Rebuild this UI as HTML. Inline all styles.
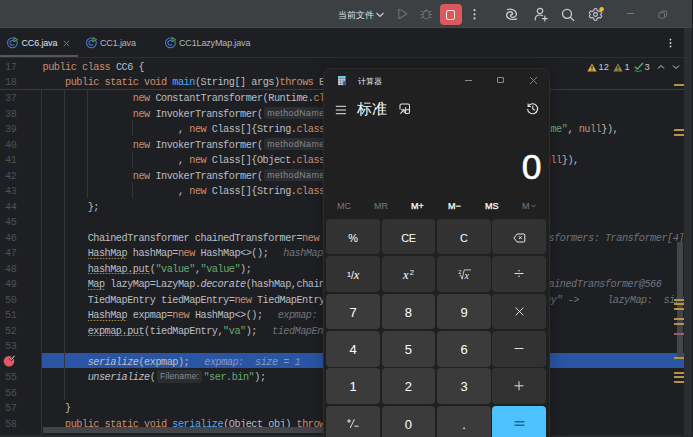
<!DOCTYPE html>
<html><head><meta charset="utf-8">
<style>
*{margin:0;padding:0;box-sizing:border-box}
html,body{width:693px;height:437px;overflow:hidden;background:#1e1f22}
body{position:relative;font-family:"Liberation Sans",sans-serif}
.abs{position:absolute}
#title{left:0;top:0;width:693px;height:28px;background:#3c4043;border-bottom:1px solid #43474a}
#tabs{left:0;top:28px;width:693px;height:30px;background:#1e1f22;border-bottom:1px solid #2b2d30}
.tab{position:absolute;top:1.3px;height:29px;color:#b4b7bc;font-size:9px;letter-spacing:-0.15px;line-height:29px;white-space:nowrap}
.code{font-family:"Liberation Mono",monospace;font-size:10.2px;letter-spacing:-0.47px;color:#bcbec4;white-space:pre}
#editor{position:absolute;left:0;top:0;width:693px;height:437px}
.ln{position:absolute;left:0;width:693px;height:15.5px;line-height:15.5px}
.hl{background:linear-gradient(to right,#1e1f22 42px,#2a55a5 42px)}
.hl .num{visibility:hidden}
.num{position:absolute;left:0;top:0;width:42px;padding-left:5px;color:#4b5059}
.txt{position:absolute;left:42.5px}
.k{color:#cf8e6d}
.f{color:#56a8f5}
.s{color:#6aab73}
.i{font-style:italic}
.u{background-image:repeating-linear-gradient(90deg,#a08442 0 1.5px,rgba(160,132,66,0.35) 1.5px 3px);background-size:100% 1px;background-repeat:no-repeat;background-position:0 9.4px}
.hint{display:inline-block;background:#2b2d30;color:#868a91;font-family:"Liberation Sans",sans-serif;font-size:8.8px;letter-spacing:0.45px;border-radius:3px;padding:0 3px;line-height:12.3px;vertical-align:1px;margin:0 1.4px 0 1.6px}
.dbg{color:#6f737a;font-style:italic;margin-left:15px}
.hl .dbg{color:#8797bd}
.guide{position:absolute;width:1px;background:#313438}
#sticky{position:absolute;left:0;top:58px;width:684px;height:32px;background:#1e1f22;border-bottom:1px solid #393b40}
.sl{position:absolute;left:0;width:693px;height:15.1px;line-height:15.1px}
#calc{position:absolute;left:323px;top:68px;width:227px;height:380px;background:#202020;border-radius:8px;border:1px solid #2c2c2c;box-shadow:0 0 16px rgba(0,0,0,0.28);overflow:hidden;font-family:"Liberation Sans",sans-serif;color:#fff}
.cb{position:absolute;width:53.7px;height:35.5px;border-radius:4px;background:#3b3b3b;color:#fff;text-align:center;line-height:37px;font-size:13px}
.op{background:#323232;font-size:10.9px;line-height:38.5px}
.mem{position:absolute;top:130px;font-size:9px;color:#fff;line-height:14px;-webkit-text-stroke:0.25px #fff}
.memd{color:#7b7b7b;-webkit-text-stroke:0}
.mk{position:absolute;left:674px;width:10px;height:2px;background:#b39345}
.ln .num,.ln .txt{top:1.9px}

</style></head><body>
<div id="title" class="abs">
  <div class="abs" style="left:338px;top:4.5px;height:20px;line-height:20px;font-size:8.5px;color:#dfe1e5;white-space:nowrap">当前文件</div>
  <svg class="abs" style="left:374.5px;top:11px" width="10" height="8" viewBox="0 0 10 8"><path d="M1.5 2 L5 5.5 L8.5 2" fill="none" stroke="#c9ccd1" stroke-width="1.1"/></svg>
  <svg class="abs" style="left:397px;top:8px" width="11" height="12" viewBox="0 0 11 12"><path d="M1.8 1.8 Q1.8 0.9 2.7 1.4 L9.3 5.3 Q10 5.8 9.3 6.3 L2.7 10.2 Q1.8 10.7 1.8 9.8 Z" fill="none" stroke="#6f737a" stroke-width="1.1" stroke-linejoin="round"/></svg>
  <svg class="abs" style="left:419px;top:8px" width="14" height="13" viewBox="0 0 14 13"><g fill="none" stroke="#6f737a" stroke-width="1" stroke-linecap="round"><ellipse cx="7.2" cy="6.9" rx="3.2" ry="4"/><path d="M5.2 2.9 Q7.2 0.4 9.2 2.9"/><path d="M4 3.9 L2.2 3.2 M4 6.5 H1.8 M4 9 L2.2 9.8 M10.4 3.9 L12.2 3.2 M10.4 6.5 H12.6 M10.4 9 L12.2 9.8"/></g></svg>
  <div class="abs" style="left:440px;top:3.5px;width:21.5px;height:21.5px;border-radius:4px;background:#d95a5d"></div>
  <div class="abs" style="left:445.6px;top:9.6px;width:9.8px;height:10px;border-radius:2px;border:1.4px solid #f6e8e8"></div>
  <svg class="abs" style="left:472px;top:8px" width="5" height="13" viewBox="0 0 5 13"><g fill="#c9ccd1"><circle cx="2.5" cy="2.2" r="1.1"/><circle cx="2.5" cy="6.3" r="1.1"/><circle cx="2.5" cy="10.4" r="1.1"/></g></svg>
  <svg class="abs" style="left:502px;top:5px" width="20" height="20" viewBox="0 0 20 20"><g fill="none" stroke="#c9ccd1" stroke-width="1.3" stroke-linecap="round"><path d="M5.3 4.5 C9 3.4 14.2 4.8 14.4 9 C14.5 12.2 10.6 13.2 8.9 11.6 C7.9 10.6 8.8 9 10.3 9.4"/><path d="M14.7 13.8 C11 15.2 4.9 14.2 4.6 10.2 C4.4 7.2 8.2 5.9 10.1 7.5 C11.1 8.5 10.6 10 9.2 9.7"/></g></svg>
  <svg class="abs" style="left:534px;top:7px" width="15" height="15" viewBox="0 0 15 15"><g fill="none" stroke="#c9ccd1" stroke-width="1.2" stroke-linecap="round"><circle cx="6" cy="4" r="2.7"/><path d="M1.2 12.8 C1.2 9.5 3.5 8 6 8 C7 8 7.8 8.2 8.5 8.6"/><path d="M10.8 9.2 V14 M8.4 11.6 H13.2"/></g></svg>
  <svg class="abs" style="left:561px;top:8px" width="15" height="14" viewBox="0 0 15 14"><g fill="none" stroke="#c9ccd1" stroke-width="1.3" stroke-linecap="round"><circle cx="6" cy="5.8" r="4.5"/><path d="M9.3 9.2 L12.8 12.6"/></g></svg>
  <svg class="abs" style="left:588px;top:7px" width="17" height="15" viewBox="0 0 17 15"><g fill="none" stroke="#c9ccd1" stroke-width="1.1" stroke-linejoin="round"><path d="M6.3 1.8 H8.7 L9.2 3.6 L10.8 4.5 L12.6 4 L13.8 6 L12.5 7.5 L13.8 9 L12.6 11 L10.8 10.5 L9.2 11.4 L8.7 13.2 H6.3 L5.8 11.4 L4.2 10.5 L2.4 11 L1.2 9 L2.5 7.5 L1.2 6 L2.4 4 L4.2 4.5 L5.8 3.6 Z"/><circle cx="7.5" cy="7.5" r="1.9"/></g><circle cx="13.6" cy="2.3" r="2.3" fill="#e9b93b"/></svg>
  <div class="abs" style="left:626.5px;top:13px;width:7px;height:1px;background:#75787d"></div>
  <svg class="abs" style="left:658px;top:10px" width="10" height="9" viewBox="0 0 10 9"><g fill="none" stroke="#75787d" stroke-width="0.9"><rect x="1" y="2.6" width="5.6" height="5.6" rx="1.2"/><path d="M3 2.4 V2 Q3 1 4 1 H7.6 Q8.6 1 8.6 2 V5.6 Q8.6 6.6 7.6 6.6 H7"/></g></svg>
</div>
<div id="tabs" class="abs">
  <svg class="abs" style="left:6px;top:8px" width="13" height="13" viewBox="0 0 13 13"><g fill="none" stroke="#4578d8" stroke-width="1.05"><circle cx="6.4" cy="6.85" r="4.9"/><path d="M7.9 5.3 A2.3 2.3 0 1 0 7.9 8.4"/></g><path d="M7.3 0.3 L12.6 3.6 L7.3 6.9 Z" fill="#1e1f22"/><path d="M7.9 1.4 L11.6 3.6 L7.9 5.8 Z" fill="#2a3a2c" stroke="#55a85a" stroke-width="1"/></svg>
  <div class="tab" style="left:21.5px;color:#dfe1e5">CC6.java</div>
  <div class="abs" style="left:63.3px;top:12.4px;width:7px;height:7px"><svg style="display:block" width="7" height="7" viewBox="0 0 7 7"><path d="M0.8 0.8 L6.2 6.2 M6.2 0.8 L0.8 6.2" stroke="#7e8187" stroke-width="0.9"/></svg></div>
  <svg class="abs" style="left:85px;top:8px" width="13" height="13" viewBox="0 0 13 13"><g fill="none" stroke="#4578d8" stroke-width="1.05"><circle cx="6.4" cy="6.85" r="4.9"/><path d="M7.9 5.3 A2.3 2.3 0 1 0 7.9 8.4"/></g><path d="M7.3 0.3 L12.6 3.6 L7.3 6.9 Z" fill="#1e1f22"/><path d="M7.9 1.4 L11.6 3.6 L7.9 5.8 Z" fill="#2a3a2c" stroke="#55a85a" stroke-width="1"/></svg>
  <div class="tab" style="left:100px">CC1.java</div>
  <svg class="abs" style="left:164px;top:8px" width="13" height="13" viewBox="0 0 13 13"><g fill="none" stroke="#4578d8" stroke-width="1.05"><circle cx="6.4" cy="6.85" r="4.9"/><path d="M7.9 5.3 A2.3 2.3 0 1 0 7.9 8.4"/></g><path d="M7.3 0.3 L12.6 3.6 L7.3 6.9 Z" fill="#1e1f22"/><path d="M7.9 1.4 L11.6 3.6 L7.9 5.8 Z" fill="#2a3a2c" stroke="#55a85a" stroke-width="1"/></svg>
  <div class="tab" style="left:179px">CC1LazyMap.java</div>
  <div class="abs" style="left:0;top:27px;width:78px;height:2px;background:#56585d"></div>
  <svg class="abs" style="left:668px;top:9px" width="5" height="12" viewBox="0 0 5 12"><g fill="#dfe1e5"><circle cx="2.5" cy="2.6" r="0.9"/><circle cx="2.5" cy="6" r="0.9"/><circle cx="2.5" cy="9.4" r="0.9"/></g></svg>
</div>

<div id="editor" class="code">
<div class="ln" style="top:89.15px"><span class="num">37</span><span class="txt">                <span class="k">new</span> ConstantTransformer(Runtime.<span class="k">class</span>),</span></div>
<div class="ln" style="top:104.67px"><span class="num">38</span><span class="txt">                <span class="k">new</span> InvokerTransformer(<span class="hint" style="letter-spacing:0.45px">methodName:</span><span class="s">"getMethod"</span></span></div>
<div class="ln" style="top:120.19px"><span class="num">39</span><span class="txt">                        , <span class="k">new</span> Class[]{String.<span class="k">class</span>, Class[].<span class="k">class</span>}, <span class="k">new</span> Object[]{<span class="s">"getRuntime"</span>, <span class="k">null</span>}),</span></div>
<div class="ln" style="top:135.71px"><span class="num">40</span><span class="txt">                <span class="k">new</span> InvokerTransformer(<span class="hint" style="letter-spacing:0.45px">methodName:</span><span class="s">"invoke"</span></span></div>
<div class="ln" style="top:151.23px"><span class="num">41</span><span class="txt">                        , <span class="k">new</span> Class[]{Object.<span class="k">class</span>, Object[].<span class="k">class</span>}, <span class="k">new</span> Object[]{<span class="k">null</span>, <span class="k">null</span>}),</span></div>
<div class="ln" style="top:166.75px"><span class="num">42</span><span class="txt">                <span class="k">new</span> InvokerTransformer(<span class="hint" style="letter-spacing:0.45px">methodName:</span><span class="s">"exec"</span></span></div>
<div class="ln" style="top:182.27px"><span class="num">43</span><span class="txt">                        , <span class="k">new</span> Class[]{String.<span class="k">class</span>}, <span class="k">new</span> Object[]{<span class="s">"calc"</span>})</span></div>
<div class="ln" style="top:197.79px"><span class="num">44</span><span class="txt">        };</span></div>
<div class="ln" style="top:213.31px"><span class="num">45</span><span class="txt"></span></div>
<div class="ln" style="top:228.83px"><span class="num">46</span><span class="txt">        ChainedTransformer chainedTransformer=<span class="k">new</span> ChainedTransformer(transformers);<span class="dbg" style="">transformers: Transformer[4]@560</span></span></div>
<div class="ln" style="top:244.35px"><span class="num">47</span><span class="txt">        <span class="u">HashMap</span> hashMap=<span class="k">new</span> HashMap&lt;&gt;();<span class="dbg" style="">hashMap:  size = 0</span></span></div>
<div class="ln" style="top:259.87px"><span class="num">48</span><span class="txt">        <span class="u">hashMap.put</span>(<span class="s">"value"</span>,<span class="s">"value"</span>);</span></div>
<div class="ln" style="top:275.39px"><span class="num">49</span><span class="txt">        <span class="u">Map</span> lazyMap=LazyMap.<span class="i">decorate</span>(hashMap,chainedTransformer);<span class="dbg" style="">chainedTransformer: ChainedTransformer@566</span></span></div>
<div class="ln" style="top:290.91px"><span class="num">50</span><span class="txt">        TiedMapEntry tiedMapEntry=<span class="k">new</span> TiedMapEntry(lazyMap,<span class="s">"key"</span>);<span class="dbg" style="position:absolute;left:397.3px;top:0">tiedMapEntry: "key" -&gt;     lazyMap:  size = 1</span></span></div>
<div class="ln" style="top:306.43px"><span class="num">51</span><span class="txt">        <span class="u">HashMap</span> expmap=<span class="k">new</span> HashMap&lt;&gt;();<span class="dbg" style="">expmap:  size = 1</span></span></div>
<div class="ln" style="top:321.95px"><span class="num">52</span><span class="txt">        <span class="u">expmap.put</span>(tiedMapEntry,<span class="s">"va"</span>);<span class="dbg" style="">tiedMapEntry: "key" -&gt;</span></span></div>
<div class="ln" style="top:337.47px"><span class="num">53</span><span class="txt"></span></div>
<div class="ln hl" style="top:352.99px"><span class="num">54</span><span class="txt">        <span class="i">serialize</span>(expmap);<span class="dbg" style="">expmap:  size = 1</span></span></div>
<div class="ln" style="top:368.51px"><span class="num">55</span><span class="txt">        <span class="i">unserialize</span>(<span class="hint" style="letter-spacing:0.05px">Filename:</span><span class="s">"ser.bin"</span>);</span></div>
<div class="ln" style="top:384.03px"><span class="num">56</span><span class="txt"></span></div>
<div class="ln" style="top:399.55px"><span class="num">57</span><span class="txt">    }</span></div>
<div class="ln" style="top:415.07px"><span class="num">58</span><span class="txt">    <span class="k">public static void</span> <span class="f">serialize</span>(Object obj) <span class="k">throws</span> IOException {</span></div>
<div class="guide" style="left:41px;top:90px;height:347px"></div>
<div class="guide" style="left:64px;top:90px;height:309.55px"></div>
<div class="guide" style="left:87.3px;top:90px;height:107.79px"></div>
<div class="guide" style="left:132px;top:120.19px;height:15.52px"></div>
<div class="guide" style="left:132px;top:151.23px;height:15.52px"></div>
<div class="guide" style="left:132px;top:182.27px;height:15.52px"></div>
</div>
<div id="sticky" class="code">
  <div class="sl" style="top:1.8px"><span class="num">17</span><span class="txt"><span class="k">public class</span> CC6 {</span></div>
  <div class="sl" style="top:16.9px"><span class="num">18</span><span class="txt">    <span class="k">public static void</span> <span class="f">main</span>(String[] args)<span class="k">throws</span> Exception {</span></div>
</div>
<div class="abs" style="left:684px;top:28px;width:8px;height:409px;background:#2b2d30"></div>
<div class="abs" style="left:692px;top:0;width:1px;height:437px;background:#1c1d20"></div>
<div class="abs" style="left:677px;top:242px;width:6.2px;height:116px;background:#434548"></div>
<div class="abs" style="left:43.3px;top:427px;width:290px;height:6px;background:#434447"></div>
<div class="abs" style="left:0;top:434.5px;width:692px;height:2.5px;background:#27292c"></div>
<div id="markers">
  <div class="mk" style="top:84.2px"></div>
  <div class="mk" style="top:129.2px"></div>
  <div class="mk" style="top:134.2px"></div>
  <div class="mk" style="top:299.2px"></div>
  <div class="mk" style="top:303.2px"></div>
  <div class="mk" style="top:308.2px"></div>
  <div class="mk" style="top:318.2px"></div>
  <div class="mk" style="top:323.2px"></div>
  <div class="mk" style="top:333.2px;background:#9a5e6c"></div>
  <div class="mk" style="top:357.2px"></div>
  <div class="mk" style="top:371.7px"></div>
  <div class="mk" style="top:376.2px"></div>
  <div class="mk" style="top:381.2px"></div>
</div>
<div id="status" class="abs" style="left:585px;top:60px;width:98px;height:14px;font-size:9.3px;line-height:14px;color:#c9ccd1;white-space:nowrap">
  <svg class="abs" style="left:2px;top:2.5px" width="10" height="9" viewBox="0 0 10 9"><path d="M5 0.5 L9.6 8.6 H0.4 Z" fill="#d9a83f"/><rect x="4.45" y="2.8" width="1.1" height="3.2" fill="#1e1f22"/><rect x="4.45" y="6.7" width="1.1" height="1.1" fill="#1e1f22"/></svg>
  <span class="abs" style="left:13.5px;top:0">12</span>
  <svg class="abs" style="left:27.5px;top:2.5px" width="10" height="9" viewBox="0 0 10 9"><path d="M5 0.5 L9.6 8.6 H0.4 Z" fill="#9e8146"/><rect x="4.45" y="2.8" width="1.1" height="3.2" fill="#1e1f22"/><rect x="4.45" y="6.7" width="1.1" height="1.1" fill="#1e1f22"/></svg>
  <span class="abs" style="left:39.5px;top:0">1</span>
  <svg class="abs" style="left:49px;top:1.5px" width="10" height="11" viewBox="0 0 10 11"><path d="M0.8 4.8 L3.3 7.2 L9 1" fill="none" stroke="#5fb865" stroke-width="1.2"/><path d="M0.6 9.2 Q1.8 8.2 3 9.2 T5.4 9.2 T7.8 9.2" fill="none" stroke="#5fb865" stroke-width="0.8"/></svg>
  <span class="abs" style="left:59.5px;top:0">3</span>
  <svg class="abs" style="left:72px;top:4px" width="8" height="6" viewBox="0 0 8 6"><path d="M1 4.5 L4 1.5 L7 4.5" fill="none" stroke="#dfe1e5" stroke-width="0.9"/></svg>
  <svg class="abs" style="left:87px;top:4px" width="8" height="6" viewBox="0 0 8 6"><path d="M1 1.5 L4 4.5 L7 1.5" fill="none" stroke="#dfe1e5" stroke-width="0.9"/></svg>
</div>
<svg class="abs" style="left:3px;top:354px" width="14" height="14" viewBox="0 0 14 14"><circle cx="6" cy="7.2" r="5.3" fill="#e55765"/><path d="M6.6 4 L8.3 5.6 L11.6 1.8" fill="none" stroke="#1e1f22" stroke-width="2.2"/><path d="M6.6 4 L8.3 5.6 L11.6 1.8" fill="none" stroke="#e8e8e8" stroke-width="1"/></svg>
<div id="calc">
  <svg class="abs" style="left:13.7px;top:6.7px" width="8" height="10" viewBox="0 0 8 10"><rect x="0" y="0" width="7.4" height="9.1" fill="#c9d2de"/><rect x="0" y="0" width="7.4" height="2.1" fill="#5fd0f5"/><g fill="#5a606a"><rect x="0" y="2.1" width="7.4" height="0.5"/><rect x="0" y="4.75" width="7.4" height="0.45"/><rect x="0" y="6.95" width="7.4" height="0.45"/><rect x="2.2" y="2.1" width="0.4" height="7"/><rect x="4.8" y="2.1" width="0.4" height="7"/></g><rect x="5.2" y="5.2" width="2.2" height="3.9" fill="#2557b8"/></svg>
  <div class="abs" style="left:33.5px;top:6px;font-size:8.1px;line-height:14px;color:#f0f0f0;white-space:nowrap">计算器</div>
  <div class="abs" style="left:141px;top:10.5px;width:7px;height:1px;background:#8a8a8a"></div>
  <div class="abs" style="left:173.3px;top:7.8px;width:7px;height:6.6px;border:1px solid #8a8a8a;border-radius:1px"></div>
  <svg class="abs" style="left:205px;top:6.6px" width="9" height="9" viewBox="0 0 9 9"><path d="M1 1 L8 8 M8 1 L1 8" stroke="#8a8a8a" stroke-width="0.9"/></svg>
  <svg class="abs" style="left:11px;top:36px" width="12" height="10" viewBox="0 0 12 10"><path d="M0.8 1.3 H11 M0.8 5 H11 M0.8 8.7 H11" stroke="#e6e6e6" stroke-width="1"/></svg>
  <div class="abs" style="left:33px;top:31px;font-size:15px;line-height:18px;color:#fff;white-space:nowrap">标准</div>
  <svg class="abs" style="left:74.8px;top:33.8px" width="12" height="12" viewBox="0 0 12 12"><g fill="none" stroke="#e6e6e6" stroke-width="1.05" stroke-linecap="round" stroke-linejoin="round"><path d="M1 6 V2.5 Q1 1 2.5 1 H9 Q10.5 1 10.5 2.5 V9 Q10.5 10.5 9 10.5 H6.8"/><path d="M6.6 4.5 V10.3 M6.6 6.7 H10.3"/><path d="M1.6 10.3 L5.2 6.7 M2.4 6.7 H5.2 V9.5"/></g></svg>
  <svg class="abs" style="left:202px;top:32.6px" width="13" height="13" viewBox="0 0 13 13"><g fill="none" stroke="#e6e6e6" stroke-width="1.1"><path d="M2.3 4.2 A5 5 0 1 1 1.6 6.9"/><path d="M2.1 1.6 V4.5 H5"/><path d="M6.7 3.8 V6.8 L8.8 8.3"/></g></svg>
  <div class="abs" style="right:7.5px;top:78.5px;font-size:35.5px;line-height:38px;color:#fff;-webkit-text-stroke:0.6px #fff">0</div>
  <div class="mem memd" style="left:13px">MC</div>
  <div class="mem memd" style="left:50px">MR</div>
  <div class="mem" style="left:87px">M+</div>
  <div class="mem" style="left:124px">M−</div>
  <div class="mem" style="left:161px">MS</div>
  <div class="mem memd" style="left:198px">M<svg style="margin-left:1px;vertical-align:1px" width="5" height="4" viewBox="0 0 5 4"><path d="M0.5 0.8 L2.5 3 L4.5 0.8" fill="none" stroke="#7b7b7b" stroke-width="0.9"/></svg></div>
<div class="cb op" style="left:2.2px;top:149.6px">%</div>
<div class="cb op" style="left:57.6px;top:149.6px"><span style="letter-spacing:-0.5px">CE</span></div>
<div class="cb op" style="left:113.2px;top:149.6px">C</div>
<div class="cb op" style="left:168.4px;top:149.6px"><svg style="position:absolute;left:21px;top:14px" width="13" height="10" viewBox="0 0 13 10"><path d="M4.2 1 H10.8 Q11.8 1 11.8 2 V8 Q11.8 9 10.8 9 H4.2 L0.9 5 Z" fill="none" stroke="#e8e8e8" stroke-width="1"/><path d="M5.9 3.2 L8.7 6 M8.7 3.2 L5.9 6" stroke="#e8e8e8" stroke-width="1"/></svg></div>
<div class="cb op" style="left:2.2px;top:187.1px"><span style="font-size:8px;vertical-align:2px">1</span><span style="font-size:10px">/</span><span style="font-family:'Liberation Serif',serif;font-style:italic;font-size:12.5px">x</span></div>
<div class="cb op" style="left:57.6px;top:187.1px"><span style="position:relative;top:-2px"><span style="font-family:'Liberation Serif',serif;font-style:italic;font-size:12.5px">x</span><span style="font-size:7.5px;vertical-align:4px;margin-left:1px">2</span></span></div>
<div class="cb op" style="left:113.2px;top:187.1px"><svg style="position:absolute;left:20.5px;top:12.5px" width="14" height="11" viewBox="0 0 14 11"><text x="0.2" y="4.6" font-family="Liberation Sans" font-size="5.6" fill="#e8e8e8">2</text><path d="M1.6 6.6 L2.6 6.1 L4.2 10.2 L6.2 0.9 H13" fill="none" stroke="#e8e8e8" stroke-width="0.8"/><text x="6.6" y="9.6" font-family="Liberation Serif" font-style="italic" font-size="10" fill="#e8e8e8">x</text></svg></div>
<div class="cb op" style="left:168.4px;top:187.1px"><svg style="position:absolute;left:22px;top:13.2px" width="10" height="9" viewBox="0 0 10 9"><path d="M0.5 4.5 H9.5" stroke="#e8e8e8" stroke-width="0.95"/><circle cx="5" cy="1.7" r="0.75" fill="#e8e8e8"/><circle cx="5" cy="7.3" r="0.75" fill="#e8e8e8"/></svg></div>
<div class="cb" style="left:2.2px;top:224.6px">7</div>
<div class="cb" style="left:57.6px;top:224.6px">8</div>
<div class="cb" style="left:113.2px;top:224.6px">9</div>
<div class="cb op" style="left:168.4px;top:224.6px"><svg style="position:absolute;left:22.5px;top:13.5px" width="9" height="9" viewBox="0 0 9 9"><path d="M0.6 0.6 L8.4 8.4 M8.4 0.6 L0.6 8.4" stroke="#e8e8e8" stroke-width="0.95"/></svg></div>
<div class="cb" style="left:2.2px;top:262.0px">4</div>
<div class="cb" style="left:57.6px;top:262.0px">5</div>
<div class="cb" style="left:113.2px;top:262.0px">6</div>
<div class="cb op" style="left:168.4px;top:262.0px"><svg style="position:absolute;left:22px;top:13px" width="10" height="9" viewBox="0 0 10 9"><path d="M0.5 4.5 H9.5" stroke="#e8e8e8" stroke-width="0.95"/></svg></div>
<div class="cb" style="left:2.2px;top:299.3px">1</div>
<div class="cb" style="left:57.6px;top:299.3px">2</div>
<div class="cb" style="left:113.2px;top:299.3px">3</div>
<div class="cb op" style="left:168.4px;top:299.3px"><svg style="position:absolute;left:22px;top:13px" width="10" height="10" viewBox="0 0 10 10"><path d="M0.5 4.8 H9.5 M5 0.3 V9.3" stroke="#e8e8e8" stroke-width="0.95"/></svg></div>
<div class="cb" style="left:2.2px;top:336.5px"><svg style="position:absolute;left:20px;top:12.5px" width="14" height="11" viewBox="0 0 14 11"><g stroke="#e8e8e8" stroke-width="0.95" fill="none"><path d="M1 3 H5 M3 1 V5"/><path d="M4.2 10 L8.4 1.2"/><path d="M8.4 8.2 H12.6"/></g></svg></div>
<div class="cb" style="left:57.6px;top:336.5px">0</div>
<div class="cb" style="left:113.2px;top:336.5px">.</div>
<div class="cb" style="left:168.4px;top:336.5px;background:#4cc2ff;color:#1a1a1a"><svg style="position:absolute;left:21.5px;top:13px" width="11" height="9" viewBox="0 0 11 9"><path d="M0.5 2.8 H10.5 M0.5 6.3 H10.5" stroke="#23668a" stroke-width="1.4"/></svg></div>
</div>

</body></html>
